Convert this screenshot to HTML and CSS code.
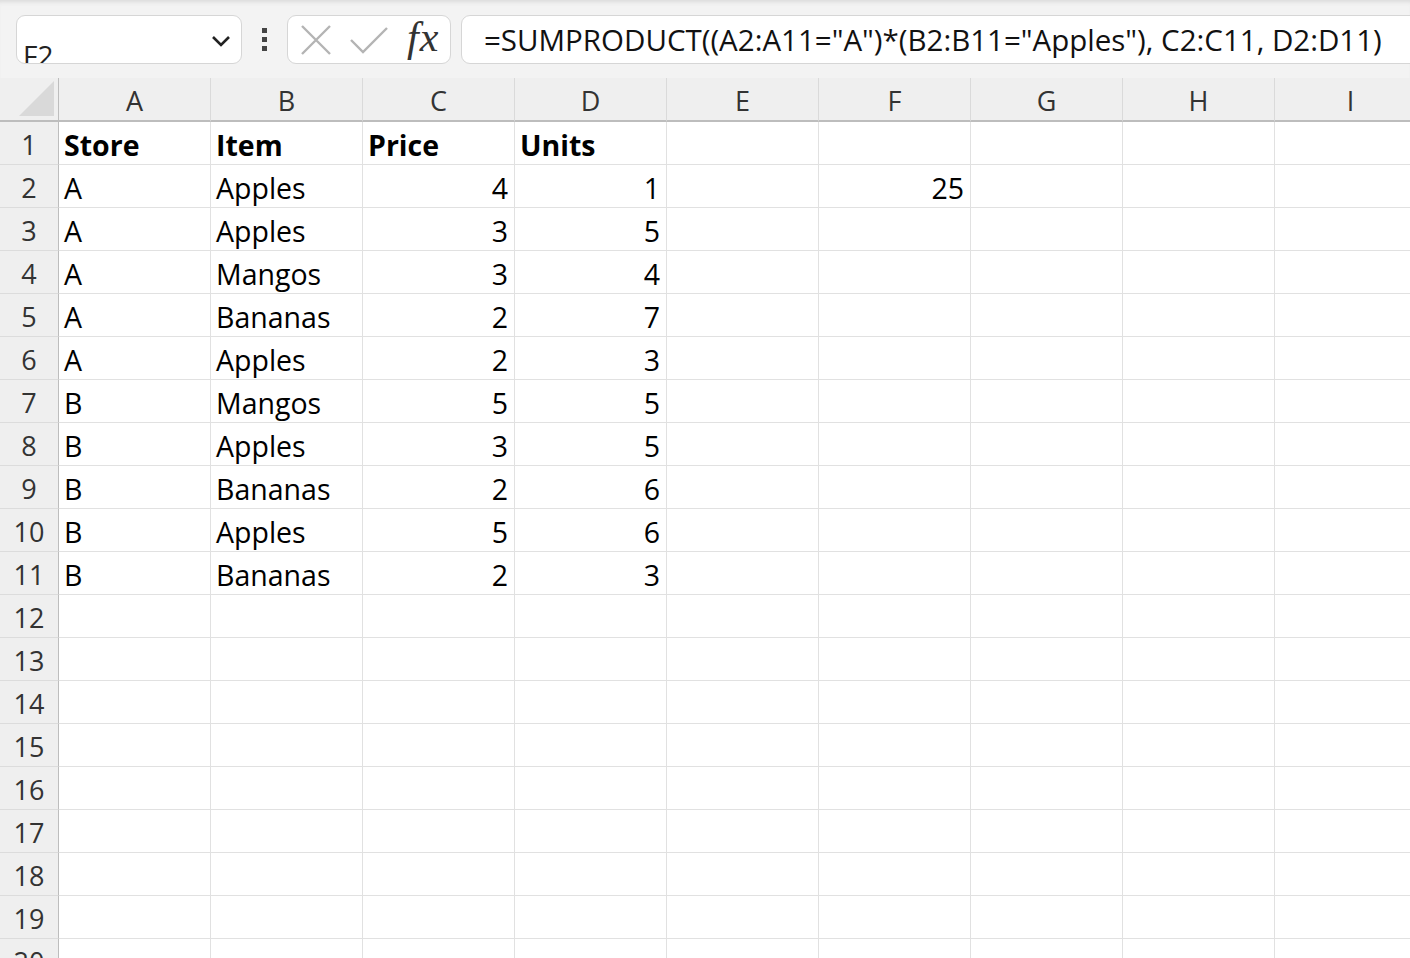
FILE: index.html
```html
<!DOCTYPE html>
<html>
<head>
<meta charset="utf-8">
<link rel="stylesheet" href="styles.css">
</head>
<body>
<div class="toolbar">
  <div class="namebox">
    <span class="namebox-text">F2</span>
    <svg class="chevron" width="20" height="14" viewBox="0 0 20 14"><path d="M2 3 L10 11 L18 3" fill="none" stroke="#222" stroke-width="2.6"/></svg>
  </div>
  <div class="dots"><span></span><span></span><span></span></div>
  <div class="fxbox">
    <svg class="icon-x" width="32" height="30" viewBox="0 0 32 30"><path d="M2 1 L30 29 M30 1 L2 29" stroke="#b4b4b4" stroke-width="2.4" fill="none"/></svg>
    <svg class="icon-check" width="38" height="28" viewBox="0 0 38 28"><path d="M1 13 L13 25 L37 1" stroke="#b4b4b4" stroke-width="2.4" fill="none"/></svg>
    <span class="fx">fx</span>
  </div>
  <div class="formula">=SUMPRODUCT((A2:A11="A")*(B2:B11="Apples"), C2:C11, D2:D11)</div>
</div>
<div class="sheet">
  <div class="corner"><div class="tri"></div></div>
  <div class="colhead">A</div><div class="colhead">B</div><div class="colhead">C</div><div class="colhead">D</div><div class="colhead">E</div><div class="colhead">F</div><div class="colhead">G</div><div class="colhead">H</div><div class="colhead">I</div>

  <div class="rowhead">1</div><div class="cell b">Store</div><div class="cell b">Item</div><div class="cell b">Price</div><div class="cell b">Units</div><div class="cell"></div><div class="cell"></div><div class="cell"></div><div class="cell"></div><div class="cell"></div>
  <div class="rowhead">2</div><div class="cell">A</div><div class="cell">Apples</div><div class="cell n">4</div><div class="cell n">1</div><div class="cell"></div><div class="cell n">25</div><div class="cell"></div><div class="cell"></div><div class="cell"></div>
  <div class="rowhead">3</div><div class="cell">A</div><div class="cell">Apples</div><div class="cell n">3</div><div class="cell n">5</div><div class="cell"></div><div class="cell"></div><div class="cell"></div><div class="cell"></div><div class="cell"></div>
  <div class="rowhead">4</div><div class="cell">A</div><div class="cell">Mangos</div><div class="cell n">3</div><div class="cell n">4</div><div class="cell"></div><div class="cell"></div><div class="cell"></div><div class="cell"></div><div class="cell"></div>
  <div class="rowhead">5</div><div class="cell">A</div><div class="cell">Bananas</div><div class="cell n">2</div><div class="cell n">7</div><div class="cell"></div><div class="cell"></div><div class="cell"></div><div class="cell"></div><div class="cell"></div>
  <div class="rowhead">6</div><div class="cell">A</div><div class="cell">Apples</div><div class="cell n">2</div><div class="cell n">3</div><div class="cell"></div><div class="cell"></div><div class="cell"></div><div class="cell"></div><div class="cell"></div>
  <div class="rowhead">7</div><div class="cell">B</div><div class="cell">Mangos</div><div class="cell n">5</div><div class="cell n">5</div><div class="cell"></div><div class="cell"></div><div class="cell"></div><div class="cell"></div><div class="cell"></div>
  <div class="rowhead">8</div><div class="cell">B</div><div class="cell">Apples</div><div class="cell n">3</div><div class="cell n">5</div><div class="cell"></div><div class="cell"></div><div class="cell"></div><div class="cell"></div><div class="cell"></div>
  <div class="rowhead">9</div><div class="cell">B</div><div class="cell">Bananas</div><div class="cell n">2</div><div class="cell n">6</div><div class="cell"></div><div class="cell"></div><div class="cell"></div><div class="cell"></div><div class="cell"></div>
  <div class="rowhead">10</div><div class="cell">B</div><div class="cell">Apples</div><div class="cell n">5</div><div class="cell n">6</div><div class="cell"></div><div class="cell"></div><div class="cell"></div><div class="cell"></div><div class="cell"></div>
  <div class="rowhead">11</div><div class="cell">B</div><div class="cell">Bananas</div><div class="cell n">2</div><div class="cell n">3</div><div class="cell"></div><div class="cell"></div><div class="cell"></div><div class="cell"></div><div class="cell"></div>
  <div class="rowhead">12</div><div class="cell"></div><div class="cell"></div><div class="cell"></div><div class="cell"></div><div class="cell"></div><div class="cell"></div><div class="cell"></div><div class="cell"></div><div class="cell"></div>
  <div class="rowhead">13</div><div class="cell"></div><div class="cell"></div><div class="cell"></div><div class="cell"></div><div class="cell"></div><div class="cell"></div><div class="cell"></div><div class="cell"></div><div class="cell"></div>
  <div class="rowhead">14</div><div class="cell"></div><div class="cell"></div><div class="cell"></div><div class="cell"></div><div class="cell"></div><div class="cell"></div><div class="cell"></div><div class="cell"></div><div class="cell"></div>
  <div class="rowhead">15</div><div class="cell"></div><div class="cell"></div><div class="cell"></div><div class="cell"></div><div class="cell"></div><div class="cell"></div><div class="cell"></div><div class="cell"></div><div class="cell"></div>
  <div class="rowhead">16</div><div class="cell"></div><div class="cell"></div><div class="cell"></div><div class="cell"></div><div class="cell"></div><div class="cell"></div><div class="cell"></div><div class="cell"></div><div class="cell"></div>
  <div class="rowhead">17</div><div class="cell"></div><div class="cell"></div><div class="cell"></div><div class="cell"></div><div class="cell"></div><div class="cell"></div><div class="cell"></div><div class="cell"></div><div class="cell"></div>
  <div class="rowhead">18</div><div class="cell"></div><div class="cell"></div><div class="cell"></div><div class="cell"></div><div class="cell"></div><div class="cell"></div><div class="cell"></div><div class="cell"></div><div class="cell"></div>
  <div class="rowhead">19</div><div class="cell"></div><div class="cell"></div><div class="cell"></div><div class="cell"></div><div class="cell"></div><div class="cell"></div><div class="cell"></div><div class="cell"></div><div class="cell"></div>
  <div class="rowhead">20</div><div class="cell"></div><div class="cell"></div><div class="cell"></div><div class="cell"></div><div class="cell"></div><div class="cell"></div><div class="cell"></div><div class="cell"></div><div class="cell"></div>
</div>
</body>
</html>
```
FILE: styles.css
```css
html, body {
  margin: 0;
  padding: 0;
  width: 1410px;
  height: 958px;
  overflow: hidden;
  background: #ffffff;
  font-family: "Open Sans", "Noto Sans", sans-serif;
  color: #000;
}

.toolbar {
  height: 78px;
  box-sizing: border-box;
  background: #f3f3f3;
  box-shadow: inset 0 5px 4px -3px #dadada;
  display: flex;
  align-items: flex-start;
  padding: 15px 0 0 16px;
}

.namebox {
  width: 226px;
  height: 49px;
  box-sizing: border-box;
  background: #fff;
  border: 1px solid #d6d6d6;
  border-radius: 9px;
  overflow: hidden;
  display: flex;
  align-items: flex-start;
  justify-content: space-between;
  padding: 0 10px 0 6px;
  flex: none;
}

.namebox-text {
  font-size: 28px;
  line-height: 1;
  padding-top: 25px;
  color: #222;
}

.chevron {
  margin-top: 18px;
}

.dots {
  width: 45px;
  flex: none;
  display: flex;
  flex-direction: column;
  align-items: center;
  gap: 4px;
  padding-top: 13px;
}

.dots span {
  width: 5px;
  height: 5px;
  background: #444;
}

.fxbox {
  width: 164px;
  height: 49px;
  flex: none;
  box-sizing: border-box;
  background: #fff;
  border: 1px solid #d6d6d6;
  border-radius: 9px;
  display: flex;
  align-items: center;
  padding-left: 12px;
}

.icon-x { margin-right: 18px; }
.icon-check { margin-right: 19px; margin-top: 2px; }

.fx {
  font-family: "Liberation Serif", "DejaVu Serif", serif;
  font-style: italic;
  font-size: 42px;
  color: #333;
  line-height: 1;
  margin-top: -6px;
  letter-spacing: 1px;
}

.formula {
  margin-left: 10px;
  flex: 1;
  margin-right: -30px;
  height: 49px;
  box-sizing: border-box;
  background: #fff;
  border: 1px solid #d6d6d6;
  border-radius: 9px;
  font-size: 29.5px;
  line-height: 47px;
  padding-left: 22px;
  white-space: nowrap;
  color: #111;
}

.sheet {
  display: grid;
  grid-template-columns: 59px repeat(9, 152px);
  grid-template-rows: 44px;
  grid-auto-rows: 43px;
  width: 1427px;
}

.corner {
  background: #efefef;
  border-right: 1px solid #bdbdbd;
  border-bottom: 2px solid #bdbdbd;
  box-sizing: border-box;
  display: flex;
  align-items: flex-end;
  justify-content: flex-end;
  padding: 0 4px 4px 0;
}

.tri {
  width: 35px;
  height: 35px;
  background: #d9d9d9;
  clip-path: polygon(100% 0, 100% 100%, 0 100%);
}

.colhead {
  background: #efefef;
  box-sizing: border-box;
  border-bottom: 2px solid #bdbdbd;
  border-right: 1px solid #dadada;
  font-size: 27px;
  color: #333;
  text-align: center;
  line-height: 46px;
}

.rowhead {
  background: #efefef;
  box-sizing: border-box;
  border-right: 1px solid #bdbdbd;
  border-bottom: 1px solid #dcdcdc;
  font-size: 27px;
  color: #333;
  text-align: center;
  line-height: 46px;
}

.cell {
  box-sizing: border-box;
  border-right: 1px solid #e1e1e1;
  border-bottom: 1px solid #e1e1e1;
  font-size: 28.5px;
  line-height: 46px;
  padding: 0 6px 0 5px;
  white-space: nowrap;
  overflow: hidden;
}

.cell.b { font-weight: 700; }
.cell.n { text-align: right; }
```
